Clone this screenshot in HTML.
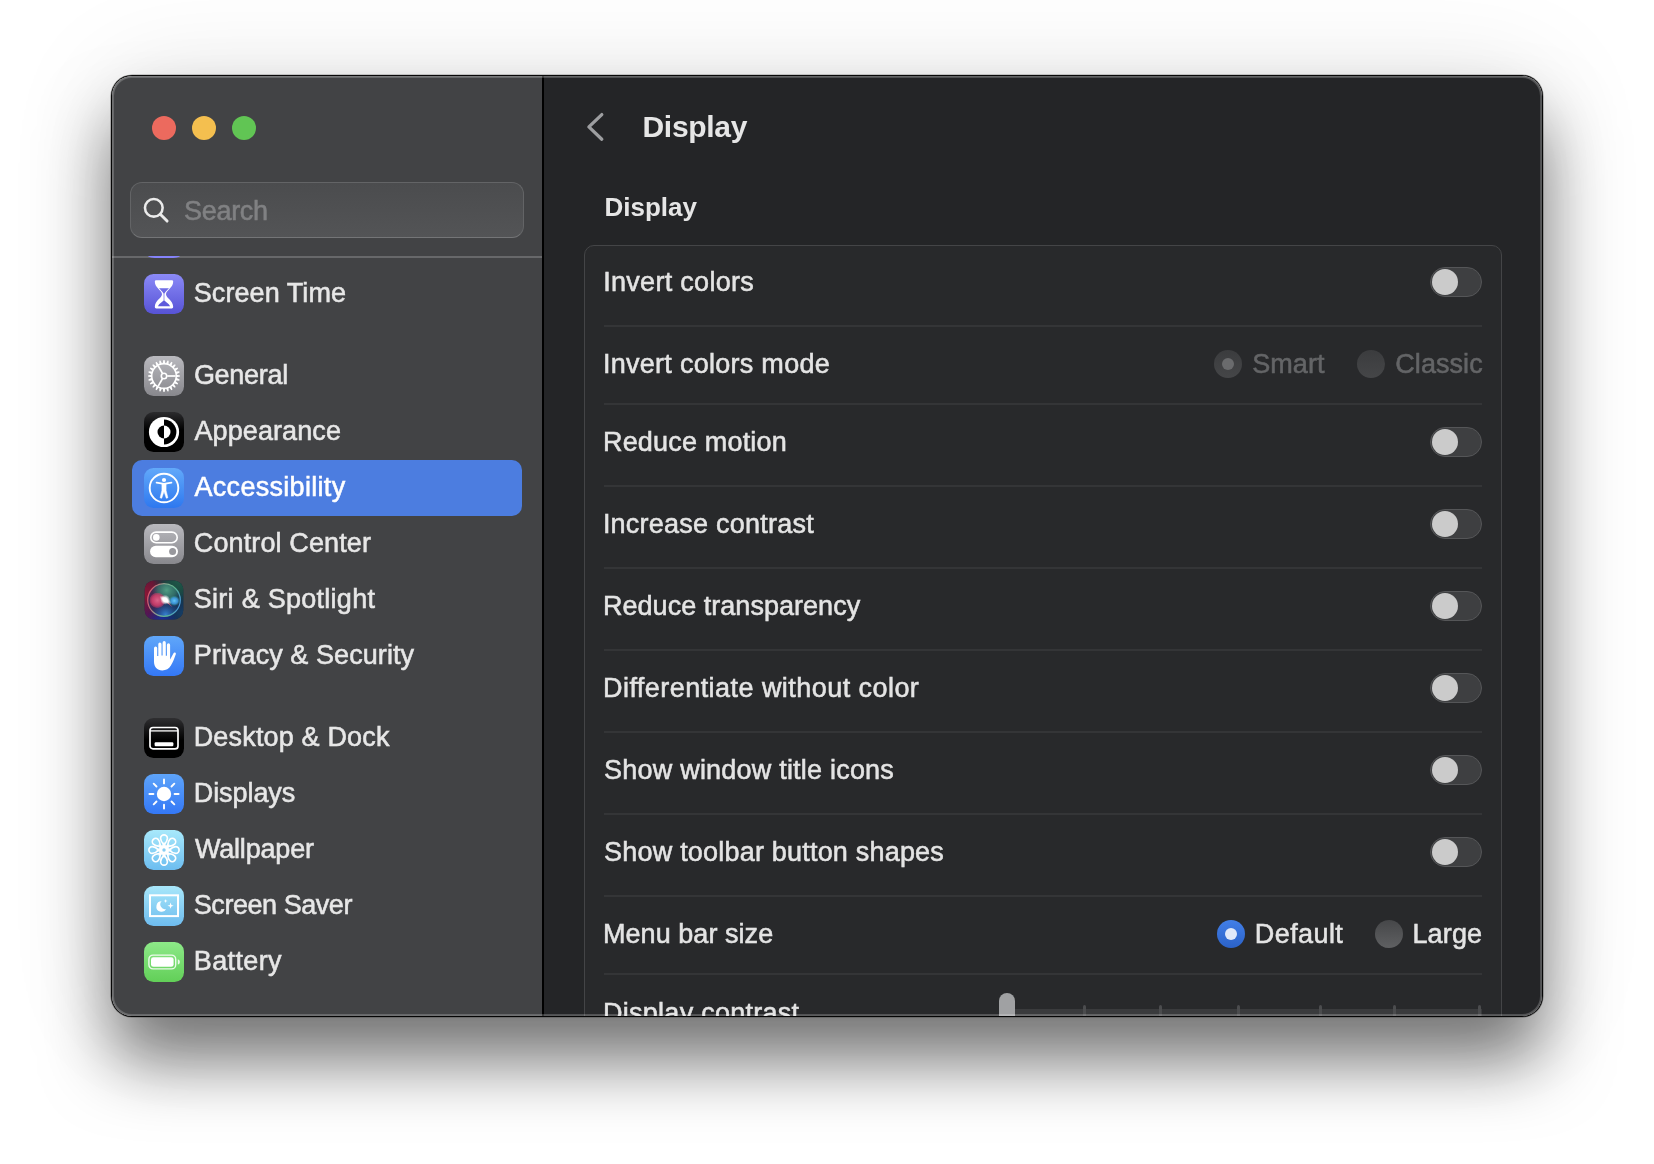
<!DOCTYPE html>
<html lang="en">
<head>
<meta charset="utf-8">
<title>Display</title>
<style>
*{box-sizing:border-box;margin:0;padding:0}
html,body{width:1654px;height:1164px;overflow:hidden;background:#fff}
body{font-family:"Liberation Sans",sans-serif;position:relative}
#shadow{position:absolute;left:112px;top:76px;width:1430px;height:940px;border-radius:20px;
 box-shadow:0 0 0 1px rgba(0,0,0,.95),0 0 0 1.6px rgba(0,0,0,.35),0 0 110px rgba(0,0,0,.10),0 45px 68px rgba(0,0,0,.52)}
#win{position:absolute;left:0;top:0;width:1654px;height:1164px;will-change:transform;clip-path:inset(76px 112px 148px 112px round 20px)}
#win>*{position:absolute}
#rim{position:absolute;left:112px;top:76px;width:1430px;height:940px;border-radius:20px;
 box-shadow:inset 0 0 0 2px rgba(255,255,255,.2),inset 0 0 0 1px rgba(255,255,255,.05),inset 0 1px 0 0 rgba(255,255,255,.08)}
#side{left:112px;top:76px;width:430px;height:940px;background:#424345}
#divider{left:542px;top:76px;width:2px;height:940px;background:#000}
#main{left:544px;top:76px;width:998px;height:940px;background:#242527}
.tl{top:116px;width:24px;height:24px;border-radius:50%}
#search{left:130px;top:182px;width:394px;height:56px;border-radius:12px;background:linear-gradient(#4b4c4e,#535456);border:1px solid #636466;border-bottom-color:#747577}
#sidesep{left:112px;top:256px;width:430px;height:2px;background:#67686a}
.selbar{width:390px;height:56px;border-radius:10px;background:#4c7de0}
.ic{width:40px;height:40px}
.ic svg{display:block}
.t{font-size:27px;line-height:30px;white-space:nowrap;-webkit-text-stroke:0.55px currentColor}
#title{left:642.5px;top:109px;font-size:30px;line-height:36px;font-weight:bold;color:#e6e6e6;letter-spacing:-0.3px}
#sect{left:604.5px;top:191px;font-size:26px;line-height:32px;font-weight:bold;color:#e6e6e6}
#card{left:584px;top:245px;width:918px;height:900px;border-radius:10px;background:#28292b;border:1px solid #444547}
.sep{left:604px;width:878px;height:2px;background:#343537}
.tog{left:1430px;width:52px;height:30px;border-radius:15px;background:#3e3f41;border:1px solid #555658}
.tog i{position:absolute;left:1px;top:1px;width:26px;height:26px;border-radius:50%;background:#cbcbcb}
.radio{width:28px;height:28px;border-radius:50%}
</style>
</head>
<body>
<div id="shadow"></div>
<div id="win">
  <div id="side"></div>
  <div id="divider"></div>
  <div id="main"></div>
  <div class="tl" style="left:152px;background:#ec6a5e"></div>
  <div class="tl" style="left:192px;background:#f4bf4f"></div>
  <div class="tl" style="left:232px;background:#61c554"></div>
  <div id="search"></div>
  <svg style="left:142px;top:196px" width="29.5" height="29.5" viewBox="0 0 30 30"><circle cx="12" cy="12" r="9" fill="none" stroke="#ebebeb" stroke-width="2.6"/><path d="M18.6 18.6L25.5 25.5" stroke="#ebebeb" stroke-width="3" stroke-linecap="round"/></svg>
  <div class="t" style="left:184.1px;top:196.3px;letter-spacing:-0.33px;color:#808183;">Search</div>
  <div id="sidesep"></div>
  <div style="left:148px;top:255.6px;width:32px;height:2.8px;border-radius:0 0 14px 14px/0 0 2.6px 2.6px;background:#8583fb"></div>
<div class="ic" style="left:144px;top:274px"><svg width="40" height="40" viewBox="0 0 40 40"><defs><linearGradient id="gst" x1="0" y1="0" x2="0" y2="1"><stop offset="0" stop-color="#8b8af7"/><stop offset="1" stop-color="#5753d6"/></linearGradient></defs><rect width="40" height="40" rx="9.5" fill="url(#gst)"/><path fill="#fff" d="M12.2 6.2H27.8Q29.2 6.2 29.2 7.6C29.2 14 22 16.5 22 20.3C22 24 29.2 26.5 29.2 33Q29.2 34.4 27.8 34.4H12.2Q10.8 34.4 10.8 33C10.8 26.5 18 24 18 20.3C18 16.5 10.8 14 10.8 7.6Q10.8 6.2 12.2 6.2Z"/><path fill="#6f6ce6" d="M15 14.2H25C23.5 16 21 17.8 20.6 19.6H19.4C19 17.8 16.5 16 15 14.2Z"/><path fill="#5f5bdc" d="M20 25.9C21 27.6 25 29.4 26.1 32.2H13.9C15 29.4 19 27.6 20 25.9Z"/><path d="M20 19.4V26" stroke="#6a67e2" stroke-width="0.7"/></svg></div>
<div class="t" style="left:193.8px;top:278.0px;letter-spacing:0.06px;color:#e7e7e7;">Screen Time</div>
<div class="ic" style="left:144px;top:356px"><svg width="40" height="40" viewBox="0 0 40 40"><defs><linearGradient id="ggn" x1="0" y1="0" x2="0" y2="1"><stop offset="0" stop-color="#b9b9be"/><stop offset="1" stop-color="#88888d"/></linearGradient></defs><rect width="40" height="40" rx="9.5" fill="url(#ggn)"/><path d="M32.94 18.73L35.99 19.44L35.99 20.56L32.94 21.27L32.83 22.12L35.59 23.60L35.30 24.68L32.17 24.57L31.84 25.37L34.13 27.51L33.57 28.48L30.57 27.57L30.05 28.25L31.70 30.91L30.91 31.70L28.25 30.05L27.57 30.57L28.48 33.57L27.51 34.13L25.37 31.84L24.57 32.17L24.68 35.30L23.60 35.59L22.12 32.83L21.27 32.94L20.56 35.99L19.44 35.99L18.73 32.94L17.88 32.83L16.40 35.59L15.32 35.30L15.43 32.17L14.63 31.84L12.49 34.13L11.52 33.57L12.43 30.57L11.75 30.05L9.09 31.70L8.30 30.91L9.95 28.25L9.43 27.57L6.43 28.48L5.87 27.51L8.16 25.37L7.83 24.57L4.70 24.68L4.41 23.60L7.17 22.12L7.06 21.27L4.01 20.56L4.01 19.44L7.06 18.73L7.17 17.88L4.41 16.40L4.70 15.32L7.83 15.43L8.16 14.63L5.87 12.49L6.43 11.52L9.43 12.43L9.95 11.75L8.30 9.09L9.09 8.30L11.75 9.95L12.43 9.43L11.52 6.43L12.49 5.87L14.63 8.16L15.43 7.83L15.32 4.70L16.40 4.41L17.88 7.17L18.73 7.06L19.44 4.01L20.56 4.01L21.27 7.06L22.12 7.17L23.60 4.41L24.68 4.70L24.57 7.83L25.37 8.16L27.51 5.87L28.48 6.43L27.57 9.43L28.25 9.95L30.91 8.30L31.70 9.09L30.05 11.75L30.57 12.43L33.57 11.52L34.13 12.49L31.84 14.63L32.17 15.43L35.30 15.32L35.59 16.40L32.83 17.88ZM31.5 20A11.5 11.5 0 1 0 8.5 20A11.5 11.5 0 1 0 31.5 20Z" fill="#fff" fill-rule="evenodd"/><path d="M23.20 20.00L31.60 20.00" stroke="#fff" stroke-width="1.7"/><path d="M18.40 22.77L14.20 30.05" stroke="#fff" stroke-width="1.7"/><path d="M18.40 17.23L14.20 9.95" stroke="#fff" stroke-width="1.7"/><circle cx="20" cy="20" r="2.7" fill="none" stroke="#fff" stroke-width="1.6"/></svg></div>
<div class="t" style="left:193.9px;top:360.0px;letter-spacing:-0.29px;color:#e7e7e7;">General</div>
<div class="ic" style="left:144px;top:412px"><svg width="40" height="40" viewBox="0 0 40 40"><defs><linearGradient id="gap" x1="0" y1="0" x2="0" y2="0.45"><stop offset="0" stop-color="#2c2c2e"/><stop offset="1" stop-color="#000"/></linearGradient></defs><rect width="40" height="40" rx="9.5" fill="url(#gap)"/><circle cx="20" cy="20" r="15.1" fill="#fff"/><path d="M20 7.6A12.4 12.4 0 0 1 20 32.4Z" fill="#000"/><path d="M20 13.5A6.5 6.5 0 0 0 20 26.5Z" fill="#000"/><path d="M20 13.5A6.5 6.5 0 0 1 20 26.5Z" fill="#fff"/></svg></div>
<div class="t" style="left:194.5px;top:416.0px;letter-spacing:0.09px;color:#e7e7e7;">Appearance</div>
<div class="selbar" style="left:132px;top:460px"></div>
<div class="ic" style="left:144px;top:468px"><svg width="40" height="40" viewBox="0 0 40 40"><defs><linearGradient id="gac" x1="0" y1="0" x2="0" y2="1"><stop offset="0" stop-color="#62a9fa"/><stop offset="1" stop-color="#2e78ef"/></linearGradient></defs><rect width="40" height="40" rx="9.5" fill="url(#gac)"/><circle cx="20" cy="20" r="14.3" fill="none" stroke="#fff" stroke-width="1.9"/><circle cx="20" cy="12" r="2.1" fill="#fff"/><path d="M12.6 14.7L20 15.8L27.4 14.7" fill="none" stroke="#fff" stroke-width="1.8" stroke-linecap="round" stroke-linejoin="round"/><path d="M17.9 15.6H22.1V22.4L23.9 29.8L22.3 30.3L20 23.6L17.7 30.3L16.1 29.8L17.9 22.4Z" fill="#fff" stroke="#fff" stroke-width="0.5" stroke-linejoin="round"/></svg></div>
<div class="t" style="left:194.5px;top:472.0px;letter-spacing:0.30px;color:#ffffff;">Accessibility</div>
<div class="ic" style="left:144px;top:524px"><svg width="40" height="40" viewBox="0 0 40 40"><defs><linearGradient id="gcc" x1="0" y1="0" x2="0" y2="1"><stop offset="0" stop-color="#b9b9be"/><stop offset="1" stop-color="#88888d"/></linearGradient></defs><rect width="40" height="40" rx="9.5" fill="url(#gcc)"/><rect x="6.8" y="8.1" width="26.4" height="10.6" rx="5.3" fill="none" stroke="#fff" stroke-width="1.6"/><circle cx="12.3" cy="13.4" r="3.3" fill="#fff"/><rect x="6" y="21.7" width="28" height="11.6" rx="5.8" fill="#fff"/><circle cx="28.6" cy="27.5" r="3.5" fill="#98989d"/></svg></div>
<div class="t" style="left:193.8px;top:528.0px;letter-spacing:0.12px;color:#e7e7e7;">Control Center</div>
<div class="ic" style="left:144px;top:580px"><svg width="40" height="40" viewBox="0 0 40 40"><defs><radialGradient id="s1" cx="0" cy="0.35" r="0.75"><stop offset="0" stop-color="#8d1636"/><stop offset="0.5" stop-color="#7a1434" stop-opacity="0.8"/><stop offset="1" stop-color="#6a1030" stop-opacity="0"/></radialGradient><radialGradient id="s2" cx="0.9" cy="0" r="0.7"><stop offset="0" stop-color="#1f5a48"/><stop offset="0.5" stop-color="#1c5042" stop-opacity="0.8"/><stop offset="1" stop-color="#0d4a3c" stop-opacity="0"/></radialGradient><radialGradient id="s3" cx="1" cy="0.85" r="0.6"><stop offset="0" stop-color="#153f66"/><stop offset="1" stop-color="#153f66" stop-opacity="0"/></radialGradient><radialGradient id="s4" cx="0" cy="1" r="0.5"><stop offset="0" stop-color="#5a1560"/><stop offset="1" stop-color="#5a1560" stop-opacity="0"/></radialGradient><radialGradient id="s6" cx="0.45" cy="1.05" r="0.4"><stop offset="0" stop-color="#1a2fa8"/><stop offset="1" stop-color="#1a2fa0" stop-opacity="0"/></radialGradient><radialGradient id="s9" cx="0.58" cy="0.2" r="0.45"><stop offset="0" stop-color="#55a888" stop-opacity="0.9"/><stop offset="0.6" stop-color="#3f8a72" stop-opacity="0.6"/><stop offset="1" stop-color="#2f7a66" stop-opacity="0"/></radialGradient><radialGradient id="s11" cx="0.55" cy="0.95" r="0.42"><stop offset="0" stop-color="#3a8ad8" stop-opacity="0.9"/><stop offset="1" stop-color="#1f5aa8" stop-opacity="0"/></radialGradient><radialGradient id="s5"><stop offset="0" stop-color="#fff"/><stop offset="0.4" stop-color="#fff" stop-opacity="0.95"/><stop offset="1" stop-color="#fff" stop-opacity="0"/></radialGradient><radialGradient id="s7"><stop offset="0" stop-color="#e2668c" stop-opacity="0.95"/><stop offset="0.65" stop-color="#d83e6c" stop-opacity="0.85"/><stop offset="0.9" stop-color="#e03a68" stop-opacity="0.45"/><stop offset="1" stop-color="#e0265f" stop-opacity="0"/></radialGradient><radialGradient id="s8"><stop offset="0" stop-color="#62c8f6"/><stop offset="0.6" stop-color="#3f9ce6" stop-opacity="0.85"/><stop offset="1" stop-color="#3ab08a" stop-opacity="0"/></radialGradient><radialGradient id="s13"><stop offset="0" stop-color="#ff6a7a" stop-opacity="0.9"/><stop offset="1" stop-color="#ff4a6a" stop-opacity="0"/></radialGradient><linearGradient id="s12" x1="0" y1="0.35" x2="1" y2="0.65"><stop offset="0" stop-color="#d8546e"/><stop offset="0.45" stop-color="#8fb89a" stop-opacity="0.85"/><stop offset="0.7" stop-color="#5fc090" stop-opacity="0.9"/><stop offset="1" stop-color="#4a98dc"/></linearGradient></defs><rect x="0.7" y="0.6" width="38.6" height="38.8" rx="9.3" fill="#15203d"/><rect x="0.7" y="0.6" width="38.6" height="38.8" rx="9.3" fill="url(#s1)"/><rect x="0.7" y="0.6" width="38.6" height="38.8" rx="9.3" fill="url(#s2)"/><rect x="0.7" y="0.6" width="38.6" height="38.8" rx="9.3" fill="url(#s3)"/><rect x="0.7" y="0.6" width="38.6" height="38.8" rx="9.3" fill="url(#s4)"/><rect x="0.7" y="0.6" width="38.6" height="38.8" rx="9.3" fill="url(#s6)"/><circle cx="20" cy="20" r="16.3" fill="#1d3866" fill-opacity="0.55"/><circle cx="20" cy="20" r="16.3" fill="url(#s9)"/><circle cx="20" cy="20" r="16.3" fill="url(#s11)"/><ellipse cx="13.4" cy="20.3" rx="8.2" ry="7.9" fill="url(#s7)"/><ellipse cx="30.3" cy="20.8" rx="5.8" ry="5.2" fill="url(#s8)"/><circle cx="20" cy="20" r="16.3" fill="none" stroke="url(#s12)" stroke-width="1.2"/><ellipse cx="24" cy="23" rx="7" ry="0.9" fill="url(#s13)" transform="rotate(42 24 23)"/><ellipse cx="21.4" cy="20" rx="7" ry="2.6" fill="url(#s5)" transform="rotate(32 21.4 20)"/><circle cx="21.2" cy="19.8" r="5" fill="url(#s5)"/></svg></div>
<div class="t" style="left:193.8px;top:584.0px;letter-spacing:0.27px;color:#e7e7e7;">Siri &amp; Spotlight</div>
<div class="ic" style="left:144px;top:636px"><svg width="40" height="40" viewBox="0 0 40 40"><defs><linearGradient id="gpr" x1="0" y1="0" x2="0" y2="1"><stop offset="0" stop-color="#60a7f9"/><stop offset="1" stop-color="#3478f6"/></linearGradient></defs><rect width="40" height="40" rx="9.5" fill="url(#gpr)"/><path fill="#fff" d="M10 21V12.2a1.6 1.6 0 0 1 3.2 0V20h1.1V8.2a1.6 1.6 0 0 1 3.2 0V19.5h1.1V6.7a1.6 1.6 0 0 1 3.2 0V19.8h1.1V8.9a1.6 1.6 0 0 1 3.2 0V23.5c1.2-1.8 2.4-4.6 3.4-6.3c0.7-1.2 2.9-0.5 2.3 1.1c-1.3 3.6-2.7 7.8-4.9 11.2c-2.1 3.3-4.7 4.9-8.6 4.9c-5.2 0-8.3-3.4-8.3-8.6Z"/></svg></div>
<div class="t" style="left:193.8px;top:640.0px;letter-spacing:0.07px;color:#e7e7e7;">Privacy &amp; Security</div>
<div class="ic" style="left:144px;top:718px"><svg width="40" height="40" viewBox="0 0 40 40"><defs><linearGradient id="gdk" x1="0" y1="0" x2="0" y2="0.55"><stop offset="0" stop-color="#2f2f31"/><stop offset="1" stop-color="#000"/></linearGradient></defs><rect width="40" height="40" rx="9.5" fill="url(#gdk)"/><rect x="6" y="9.5" width="28" height="21.4" rx="3" fill="none" stroke="#fff" stroke-width="1.7"/><path d="M6 12.9H34" stroke="#fff" stroke-width="1.3"/><rect x="10.6" y="24.2" width="18.8" height="4" rx="1.2" fill="#fff"/></svg></div>
<div class="t" style="left:193.7px;top:722.0px;letter-spacing:0.17px;color:#e7e7e7;">Desktop &amp; Dock</div>
<div class="ic" style="left:144px;top:774px"><svg width="40" height="40" viewBox="0 0 40 40"><defs><linearGradient id="gdp" x1="0" y1="0" x2="0" y2="1"><stop offset="0" stop-color="#5ea4f9"/><stop offset="1" stop-color="#3478f6"/></linearGradient></defs><rect width="40" height="40" rx="9.5" fill="url(#gdp)"/><circle cx="20" cy="20" r="7.2" fill="#fff"/><g stroke="#fff" stroke-width="1.9" stroke-linecap="round"><path d="M30.60 20.00L34.60 20.00"/><path d="M27.50 27.50L30.32 30.32"/><path d="M20.00 30.60L20.00 34.60"/><path d="M12.50 27.50L9.68 30.32"/><path d="M9.40 20.00L5.40 20.00"/><path d="M12.50 12.50L9.68 9.68"/><path d="M20.00 9.40L20.00 5.40"/><path d="M27.50 12.50L30.32 9.68"/></g></svg></div>
<div class="t" style="left:193.7px;top:778.0px;letter-spacing:-0.06px;color:#e7e7e7;">Displays</div>
<div class="ic" style="left:144px;top:830px"><svg width="40" height="40" viewBox="0 0 40 40"><defs><linearGradient id="gwp" x1="0" y1="0" x2="0" y2="1"><stop offset="0" stop-color="#a8e9fb"/><stop offset="1" stop-color="#6cbdf0"/></linearGradient></defs><rect width="40" height="40" rx="9.5" fill="url(#gwp)"/><g fill="none" stroke="#fff" stroke-width="1.65" stroke-linejoin="round"><path d="M20 14.9C19 13.6 16.6 11.6 16.6 8.3A3.4 3.4 0 0 1 23.4 8.3C23.4 11.6 21 13.6 20 14.9Z" transform="rotate(0 20 20)"/><path d="M20 14.9C19 13.6 16.6 11.6 16.6 8.3A3.4 3.4 0 0 1 23.4 8.3C23.4 11.6 21 13.6 20 14.9Z" transform="rotate(45 20 20)"/><path d="M20 14.9C19 13.6 16.6 11.6 16.6 8.3A3.4 3.4 0 0 1 23.4 8.3C23.4 11.6 21 13.6 20 14.9Z" transform="rotate(90 20 20)"/><path d="M20 14.9C19 13.6 16.6 11.6 16.6 8.3A3.4 3.4 0 0 1 23.4 8.3C23.4 11.6 21 13.6 20 14.9Z" transform="rotate(135 20 20)"/><path d="M20 14.9C19 13.6 16.6 11.6 16.6 8.3A3.4 3.4 0 0 1 23.4 8.3C23.4 11.6 21 13.6 20 14.9Z" transform="rotate(180 20 20)"/><path d="M20 14.9C19 13.6 16.6 11.6 16.6 8.3A3.4 3.4 0 0 1 23.4 8.3C23.4 11.6 21 13.6 20 14.9Z" transform="rotate(225 20 20)"/><path d="M20 14.9C19 13.6 16.6 11.6 16.6 8.3A3.4 3.4 0 0 1 23.4 8.3C23.4 11.6 21 13.6 20 14.9Z" transform="rotate(270 20 20)"/><path d="M20 14.9C19 13.6 16.6 11.6 16.6 8.3A3.4 3.4 0 0 1 23.4 8.3C23.4 11.6 21 13.6 20 14.9Z" transform="rotate(315 20 20)"/></g><path d="M20.00 12.60L21.65 16.03L25.23 14.77L23.97 18.35L27.40 20.00L23.97 21.65L25.23 25.23L21.65 23.97L20.00 27.40L18.35 23.97L14.77 25.23L16.03 21.65L12.60 20.00L16.03 18.35L14.77 14.77L18.35 16.03Z" fill="#fff" stroke="#fff" stroke-width="0.8" stroke-linejoin="round"/><circle cx="20" cy="20" r="1.7" fill="#86cdf3"/></svg></div>
<div class="t" style="left:194.9px;top:834.0px;letter-spacing:-0.18px;color:#e7e7e7;">Wallpaper</div>
<div class="ic" style="left:144px;top:886px"><svg width="40" height="40" viewBox="0 0 40 40"><defs><linearGradient id="gss" x1="0" y1="0" x2="0" y2="1"><stop offset="0" stop-color="#a8e7fa"/><stop offset="1" stop-color="#6ebcee"/></linearGradient></defs><rect width="40" height="40" rx="9.5" fill="url(#gss)"/><rect x="6" y="9.3" width="28" height="20.8" fill="none" stroke="#fff" stroke-width="2"/><path fill="#fff" d="M17.6 15.3a5.2 5.2 0 1 0 4.6 7.6a4.6 4.6 0 0 1-4.6-7.6Z"/><path fill="#fff" d="M21.6 12.9l0.5 1.5l1.5 0.5l-1.5 0.5l-0.5 1.5l-0.5-1.5l-1.5-0.5l1.5-0.5Z"/><path fill="#fff" d="M26.6 16.6l0.8 2.3l2.3 0.8l-2.3 0.8l-0.8 2.3l-0.8-2.3l-2.3-0.8l2.3-0.8Z"/></svg></div>
<div class="t" style="left:193.8px;top:890.0px;letter-spacing:-0.45px;color:#e7e7e7;">Screen Saver</div>
<div class="ic" style="left:144px;top:942px"><svg width="40" height="40" viewBox="0 0 40 40"><defs><linearGradient id="gbt" x1="0" y1="0" x2="0" y2="1"><stop offset="0" stop-color="#8de988"/><stop offset="1" stop-color="#62cf58"/></linearGradient></defs><rect width="40" height="40" rx="9.5" fill="url(#gbt)"/><rect x="4.9" y="13.1" width="26.8" height="13.8" rx="4.2" fill="none" stroke="#fff" stroke-opacity="0.85" stroke-width="1.4"/><rect x="7" y="15.2" width="22.6" height="9.6" rx="2.4" fill="#fff"/><path d="M33.8 17.2C36.5 17.8 36.5 22 33.8 22.6Z" fill="#fff" fill-opacity="0.85"/></svg></div>
<div class="t" style="left:193.8px;top:946.0px;letter-spacing:0.37px;color:#e7e7e7;">Battery</div>
  <svg style="left:584px;top:110px" width="24" height="36" viewBox="0 0 24 36"><path d="M17.8 4.6L4.9 16.9L17.8 29.2" fill="none" stroke="#9d9ea0" stroke-width="3.3" stroke-linecap="round" stroke-linejoin="round"/></svg>
  <div id="title">Display</div>
  <div id="sect">Display</div>
  <div id="card"></div>
<div class="t" style="left:603.2px;top:267.0px;letter-spacing:0.30px;color:#e4e4e4;">Invert colors</div>
<div class="t" style="left:602.9px;top:349.0px;letter-spacing:0.28px;color:#e4e4e4;">Invert colors mode</div>
<div class="t" style="left:603.0px;top:427.0px;letter-spacing:0.18px;color:#e4e4e4;">Reduce motion</div>
<div class="t" style="left:602.9px;top:509.0px;letter-spacing:0.23px;color:#e4e4e4;">Increase contrast</div>
<div class="t" style="left:603.0px;top:591.0px;letter-spacing:0.03px;color:#e4e4e4;">Reduce transparency</div>
<div class="t" style="left:603.0px;top:673.0px;letter-spacing:0.45px;color:#e4e4e4;">Differentiate without color</div>
<div class="t" style="left:604.1px;top:755.0px;letter-spacing:0.21px;color:#e4e4e4;">Show window title icons</div>
<div class="t" style="left:604.1px;top:837.0px;letter-spacing:0.20px;color:#e4e4e4;">Show toolbar button shapes</div>
<div class="t" style="left:603.0px;top:919.0px;letter-spacing:0.05px;color:#e4e4e4;">Menu bar size</div>
<div class="t" style="left:603.0px;top:997.5px;letter-spacing:0.27px;color:#e4e4e4;">Display contrast</div>
<div class="sep" style="top:325px"></div>
<div class="sep" style="top:403px"></div>
<div class="sep" style="top:485px"></div>
<div class="sep" style="top:567px"></div>
<div class="sep" style="top:649px"></div>
<div class="sep" style="top:731px"></div>
<div class="sep" style="top:813px"></div>
<div class="sep" style="top:895px"></div>
<div class="sep" style="top:973px"></div>
<div class="tog" style="top:267px"><i></i></div>
<div class="tog" style="top:427px"><i></i></div>
<div class="tog" style="top:509px"><i></i></div>
<div class="tog" style="top:591px"><i></i></div>
<div class="tog" style="top:673px"><i></i></div>
<div class="tog" style="top:755px"><i></i></div>
<div class="tog" style="top:837px"><i></i></div>
<div class="t" style="left:1252.3px;top:349.0px;letter-spacing:0.03px;color:#646567;">Smart</div>
<div class="t" style="left:1395.3px;top:349.0px;letter-spacing:0.06px;color:#646567;">Classic</div>
<div class="t" style="left:1254.8px;top:919.0px;letter-spacing:0.41px;color:#e4e4e4;">Default</div>
<div class="t" style="left:1412.4px;top:919.0px;letter-spacing:0.16px;color:#e4e4e4;">Large</div>
  <!-- radios -->
  <div class="radio" style="left:1214px;top:350px;background:linear-gradient(#3b3c3e,#454648)"></div>
  <div class="radio" style="left:1222px;top:358px;width:12px;height:12px;background:#6a6b6d"></div>
  <div class="radio" style="left:1357px;top:350px;background:linear-gradient(#3b3c3e,#454648)"></div>
  <div class="radio" style="left:1217px;top:920px;background:linear-gradient(#427fe8,#2b62c8)"></div>
  <div class="radio" style="left:1225px;top:928px;width:12px;height:12px;background:#e1e9f9"></div>
  <div class="radio" style="left:1375px;top:920px;background:linear-gradient(#464749,#5f6062)"></div>
  <!-- slider -->
  <div style="left:1015px;top:1009px;width:467px;height:8px;background:#3a3b3d"></div>
  <div style="left:1083px;top:1005px;width:3px;height:12px;background:#4b4c4e;border-radius:1.5px 1.5px 0 0"></div>
  <div style="left:1159px;top:1005px;width:3px;height:12px;background:#4b4c4e;border-radius:1.5px 1.5px 0 0"></div>
  <div style="left:1237px;top:1005px;width:3px;height:12px;background:#4b4c4e;border-radius:1.5px 1.5px 0 0"></div>
  <div style="left:1319px;top:1005px;width:3px;height:12px;background:#4b4c4e;border-radius:1.5px 1.5px 0 0"></div>
  <div style="left:1393px;top:1005px;width:3px;height:12px;background:#4b4c4e;border-radius:1.5px 1.5px 0 0"></div>
  <div style="left:1478px;top:1005px;width:3px;height:12px;background:#4b4c4e;border-radius:1.5px 1.5px 0 0"></div>
  <div style="left:999px;top:993px;width:16px;height:40px;background:#a0a1a3;border-radius:8px 8px 0 0"></div>
</div>
<div id="rim"></div>
</body>
</html>
